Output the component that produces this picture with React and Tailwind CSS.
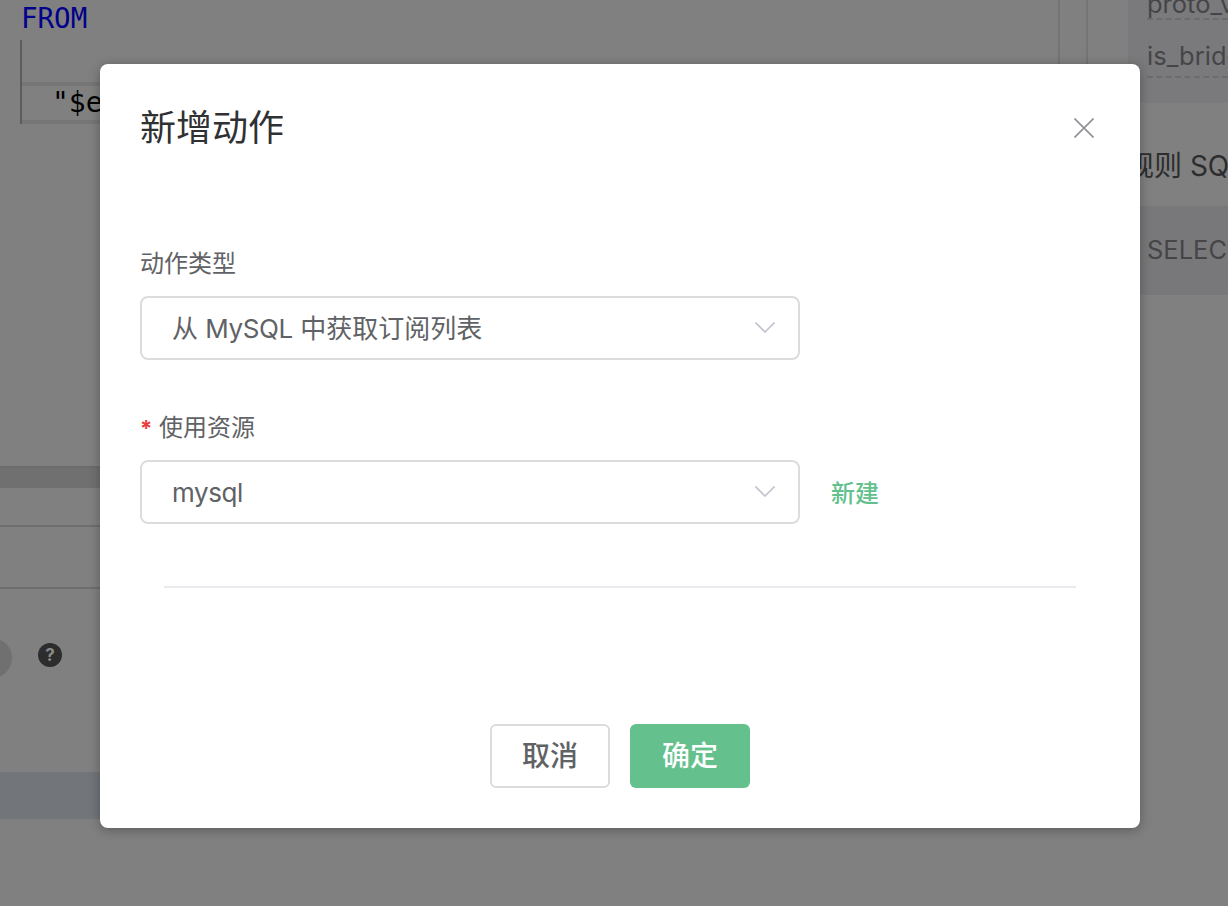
import React from "react";

const sans = "font-['Inter','Noto_Sans_CJK_SC',sans-serif]";

function Chevron() {
  return (
    <svg width="20" height="11" viewBox="0 0 20 11" fill="none" className="absolute right-[23px] top-[24px]">
      <path d="M0.5 0.5 L10 10 L19.5 0.5" stroke="#c0c4cc" strokeWidth="1.6" />
    </svg>
  );
}

function Select({ children }) {
  return (
    <div className="relative flex h-16 w-[660px] items-center whitespace-pre rounded-lg border-2 border-[#dcdcdc] bg-white pl-[30px] text-[26px] text-[#606266]">
      {children}
      <Chevron />
    </div>
  );
}

function Background() {
  return (
    <div className="flex h-[906px] w-[1228px] bg-[#808080]">
      <div className="flex w-[1128px] flex-col">
        <div className="flex h-[466px]">
          <div className="w-[1060px] border-r-2 border-[#747474] pl-[21px] font-['DejaVu_Sans_Mono',monospace]">
            <div className="h-10 text-[27.5px] leading-9 text-[#00008b]">FROM</div>
            <div className="ml-[-1px] flex h-[84px] flex-col justify-end border-l-2 border-[#5c5c5c]">
              <div className="h-[42px] border-y-4 border-[#767676] pl-[30px] text-[28px] leading-[34px] text-black">"$e</div>
            </div>
          </div>
          <div className="w-[28px] border-r-2 border-[#747474]" />
        </div>
        <div className="h-[22px] border-t-2 border-[#6c6c6c] bg-[#707070]" />
        <div className="h-[37px] bg-[#808080]" />
        <div className="h-[62px] border-t-2 border-[#6e6e6e]" />
        <div className="flex h-[185px] items-start border-t-2 border-[#6e6e6e]">
          <div className="ml-[-28px] mt-[49px] h-10 w-10 rounded-full bg-[#707070]" />
          <div className="ml-[26px] mt-[54px] flex h-6 w-6 items-center justify-center rounded-full bg-[#2d2d2d] font-['Inter',sans-serif] text-[17px] font-bold leading-none text-[#8a8a8a]">?</div>
        </div>
        <div className="h-[47px] bg-[#72757a]" />
      </div>
      <div className={`flex w-[100px] flex-col ${sans}`}>
        <div className="h-[103px] bg-[#7a7a7c] pl-[19px] text-[25.5px] text-[#454548]">
          <div className="mt-[-12px] h-[32px] overflow-hidden whitespace-nowrap border-b-2 border-dashed border-[#6c6c6e] leading-[32px]">proto_ver</div>
          <div className="mt-[17px] h-[41px] overflow-hidden whitespace-nowrap border-b-2 border-dashed border-[#6c6c6e] leading-[38px]">is_bridge</div>
        </div>
        <div className="flex h-[103px] items-center overflow-hidden whitespace-nowrap pt-[23px] text-[28px] text-[#2d2d2f]">
          <span className="ml-[-2px]">规则 SQL</span>
        </div>
        <div className="flex h-[89px] items-center overflow-hidden whitespace-nowrap bg-[#78787a] pl-[19px] text-[25.5px] text-[#454548]">SELECT</div>
      </div>
    </div>
  );
}

export default function App() {
  return (
    <div className={`relative h-[906px] w-[1228px] overflow-hidden ${sans}`}>
      <Background />
      <div className="absolute left-[100px] top-[64px] flex h-[764px] w-[1040px] flex-col rounded-lg bg-white shadow-[0_2px_12px_rgba(0,0,0,0.3)]">
        <div className="flex items-center justify-between pl-10 pr-[46px] pt-[38px]">
          <span className="text-[36px] leading-[52px] text-[#303133]">新增动作</span>
          <svg width="20" height="20" viewBox="0 0 20 20" fill="none">
            <path d="M0.5 0.5 L19.5 19.5 M19.5 0.5 L0.5 19.5" stroke="#909399" strokeWidth="1.7" />
          </svg>
        </div>
        <div className="flex flex-col pl-10 pt-[90px]">
          <label className="h-[40px] text-[24px] leading-10 text-[#606266]">动作类型</label>
          <div className="mt-3">
            <Select>从 <span className="tracking-[-0.4px]">MySQL</span> 中获取订阅列表</Select>
          </div>
          <label className="mt-12 flex h-[40px] items-center text-[24px] leading-10 text-[#606266]">
            <span className="mr-2 w-[11px] text-[22px] font-bold text-[#ee3a3a]">*</span>使用资源
          </label>
          <div className="mt-3 flex items-center">
            <Select><span className="tracking-[-0.4px]">mysql</span></Select>
            <span className="ml-[31px] mt-1 text-[24px] font-medium text-[#62c08d]">新建</span>
          </div>
        </div>
        <div className="mx-16 mt-[62px] h-0.5 bg-[#ebebef]" />
        <div className="flex flex-1 items-end justify-center gap-5 pb-10">
          <button className="h-16 w-[120px] rounded-md border-2 border-[#dcdcdc] bg-white text-[28px] font-medium text-[#606266]">取消</button>
          <button className="h-16 w-[120px] rounded-md bg-[#64c08c] text-[28px] font-medium text-white">确定</button>
        </div>
      </div>
    </div>
  );
}
